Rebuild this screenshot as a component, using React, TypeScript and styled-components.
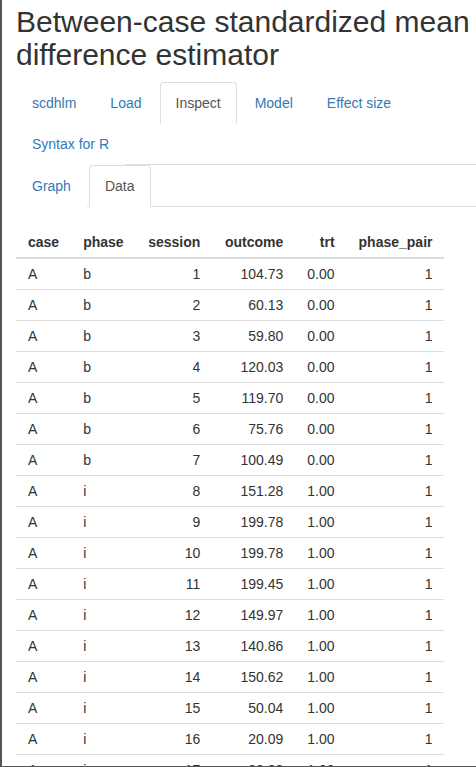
import styled, { createGlobalStyle } from 'styled-components'

const GlobalStyle = createGlobalStyle`
  html, body {
    margin: 0;
    padding: 0;
    background: #ffffff;
  }
  body {
    font-family: "Liberation Sans", Arial, Helvetica, sans-serif;
    font-size: 14px;
    line-height: 20px;
    color: #333333;
  }
  * {
    box-sizing: border-box;
  }
`

const Frame = styled.div`
  width: 476px;
  height: 767px;
  overflow: hidden;
  border-left: 2px solid #555555;
  border-bottom: 1px solid #555555;
  padding-left: 14px;
`

const Title = styled.h2`
  margin: 5px 0 11px 0;
  font-size: 30px;
  line-height: 33px;
  font-weight: 500;
  color: #333333;
`

const Tabs = styled.ul`
  display: flex;
  flex-wrap: wrap;
  list-style: none;
  margin: 0;
  padding: 0;
  border-bottom: 1px solid #dddddd;
`

const TabItem = styled.li`
  margin-bottom: -1px;
`

const TabLink = styled.a<{ $active?: boolean }>`
  display: block;
  margin-right: 2px;
  padding: 10px 15px;
  line-height: 20px;
  border: 1px solid ${p => (p.$active ? '#dddddd' : 'transparent')};
  border-bottom-color: ${p => (p.$active ? '#ffffff' : 'transparent')};
  border-radius: 4px 4px 0 0;
  background: #ffffff;
  color: ${p => (p.$active ? '#555555' : '#337ab7')};
  text-decoration: none;
  cursor: pointer;
`

const TableWrap = styled.div`
  margin-top: 20px;
`

const DataTable = styled.table`
  border-collapse: collapse;
  border-spacing: 0;
`

const HeadCell = styled.th<{ $right?: boolean; $w: number }>`
  width: ${p => p.$w}px;
  padding: 5px 12px;
  text-align: ${p => (p.$right ? 'right' : 'left')};
  font-weight: bold;
  line-height: 20px;
  border-bottom: 2px solid #dddddd;
  white-space: nowrap;
`

const Cell = styled.td<{ $right?: boolean }>`
  padding: 5px 12px;
  text-align: ${p => (p.$right ? 'right' : 'left')};
  line-height: 20px;
  border-bottom: 1px solid #dddddd;
  white-space: nowrap;
`

const columns = [
  { key: 'case', w: 55, right: false },
  { key: 'phase', w: 65, right: false },
  { key: 'session', w: 75, right: true },
  { key: 'outcome', w: 83, right: true },
  { key: 'trt', w: 51, right: true },
  { key: 'phase_pair', w: 97, right: true },
]

const outcomes = [
  '104.73', '60.13', '59.80', '120.03', '119.70', '75.76', '100.49',
  '151.28', '199.78', '199.78', '199.45', '149.97', '140.86', '150.62',
  '50.04', '20.09', '80.08', '90.35',
]

const rows = outcomes.map((outcome, i) => {
  const base = i < 7
  return [
    'A',
    base ? 'b' : 'i',
    String(i + 1),
    outcome,
    base ? '0.00' : '1.00',
    '1',
  ]
})

const mainTabs = ['scdhlm', 'Load', 'Inspect', 'Model', 'Effect size', 'Syntax for R']
const subTabs = ['Graph', 'Data']

const App = () => {
  return (
    <>
      <GlobalStyle />
      <Frame>
        <Title>Between-case standardized mean difference estimator</Title>
        <Tabs>
          {mainTabs.map(t => (
            <TabItem key={t}>
              <TabLink $active={t === 'Inspect'}>{t}</TabLink>
            </TabItem>
          ))}
        </Tabs>
        <Tabs>
          {subTabs.map(t => (
            <TabItem key={t}>
              <TabLink $active={t === 'Data'}>{t}</TabLink>
            </TabItem>
          ))}
        </Tabs>
        <TableWrap>
          <DataTable>
            <thead>
              <tr>
                {columns.map(c => (
                  <HeadCell key={c.key} $w={c.w} $right={c.right}>
                    {c.key}
                  </HeadCell>
                ))}
              </tr>
            </thead>
            <tbody>
              {rows.map((r, i) => (
                <tr key={i}>
                  {r.map((v, j) => (
                    <Cell key={j} $right={columns[j].right}>
                      {v}
                    </Cell>
                  ))}
                </tr>
              ))}
            </tbody>
          </DataTable>
        </TableWrap>
      </Frame>
    </>
  )
}

export default App
